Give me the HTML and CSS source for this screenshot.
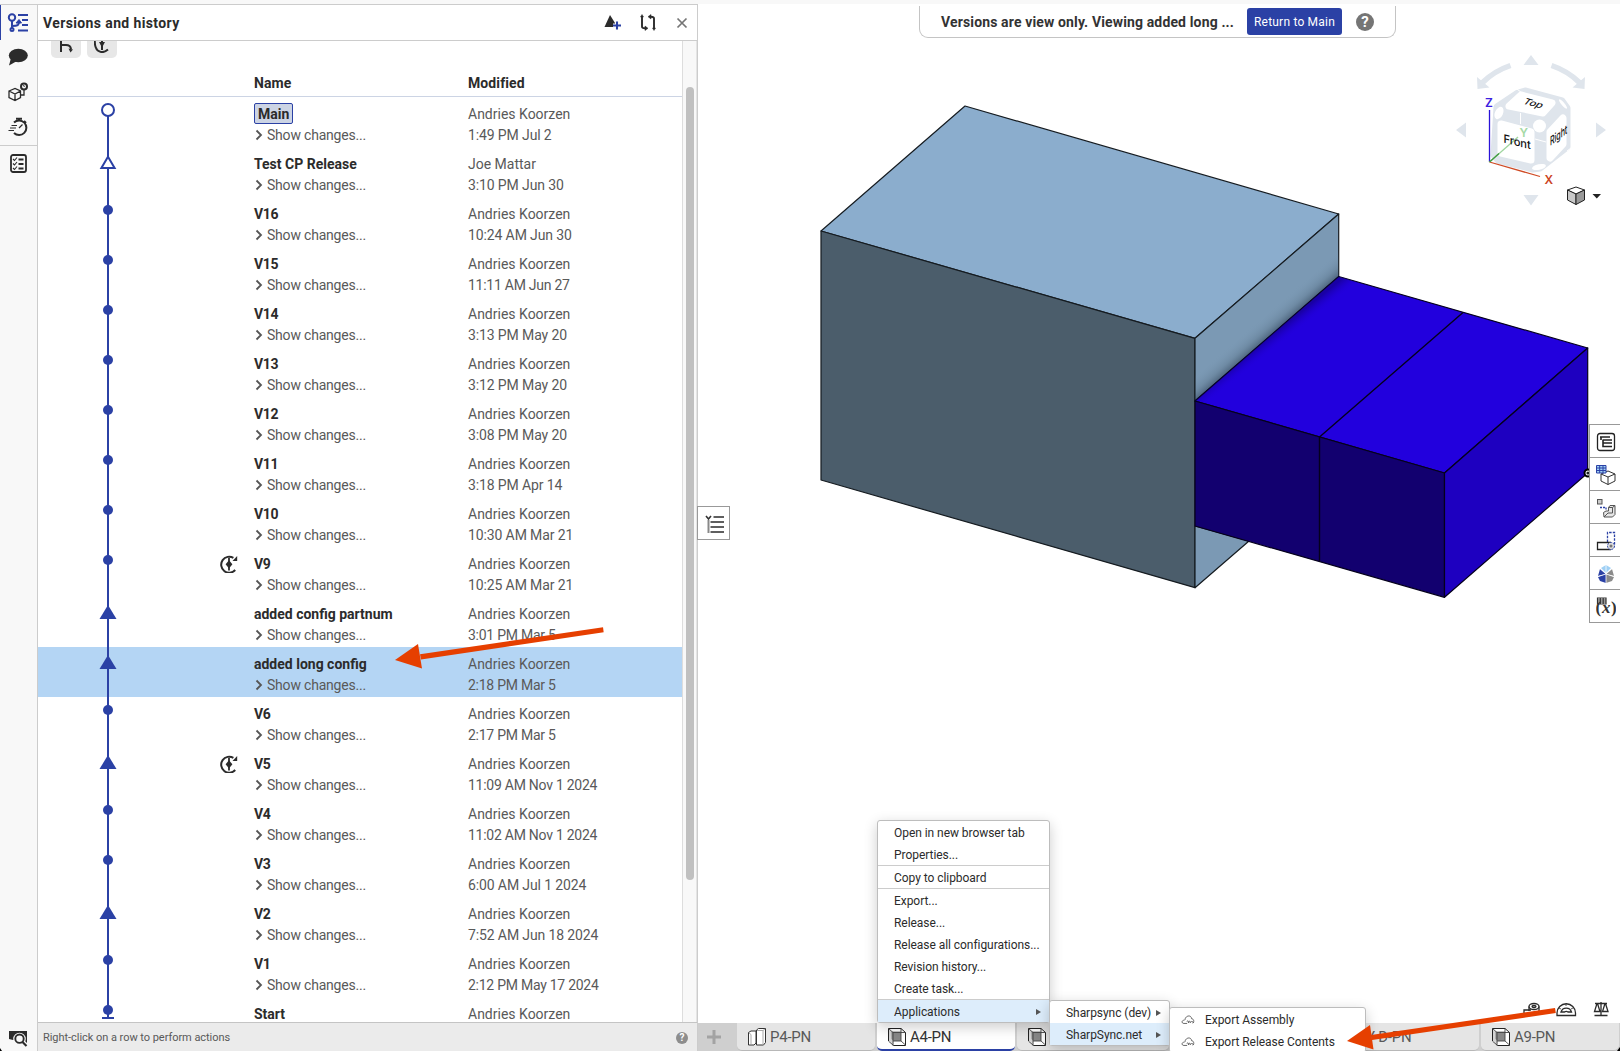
FILE: index.html
```html
<!DOCTYPE html>
<html lang="en">
<head>
<meta charset="utf-8">
<title>Versions and history</title>
<link rel="stylesheet" href="styles.css">
</head>
<body>
<svg class="defs" aria-hidden="true">
  <symbol id="main" viewBox="0 0 24 50"><path d="M12 13V50" class="gl"/><circle cx="12" cy="13" r="6" class="gh"/></symbol>
  <symbol id="open" viewBox="0 0 24 50"><path d="M12 0V50" class="gl"/><path d="M12 9.8L18.6 21H5.4Z" class="gh"/></symbol>
  <symbol id="dot" viewBox="0 0 24 50"><path d="M12 0V50" class="gl"/><circle cx="12" cy="13" r="5" class="gf"/></symbol>
  <symbol id="tri" viewBox="0 0 24 50"><path d="M12 0V50" class="gl"/><path d="M12 8L20.5 22H3.5Z" class="gf"/></symbol>
  <symbol id="start" viewBox="0 0 24 50"><path d="M12 0V20M6 21H18" class="gl"/><circle cx="12" cy="13" r="5" class="gf"/></symbol>
  <symbol id="rev" viewBox="0 0 18 18"><path d="M13.4 2.9A8 8 0 1 0 15.2 15" fill="none" stroke="#2b2b2b" stroke-width="2"/><path d="M17.2 1V6H12.5Z" fill="#2b2b2b"/><path d="M9 3V15.5" stroke="#2b2b2b" stroke-width="1.8"/><path d="M9 5.2L12.4 9.3L9 13.4L5.6 9.3Z" fill="#2b2b2b"/></symbol>
  <symbol id="chev" viewBox="0 0 8 12"><path d="M1.5 1.5L6 6L1.5 10.5" fill="none" stroke="#555" stroke-width="1.8"/></symbol>
  <symbol id="part" viewBox="0 0 18 18"><path d="M.5 .5H13L17.5 4.5V17.5H5.5L.5 13Z" fill="#fff" stroke="#222" stroke-width="1"/><path d="M1 1L5.500 5V17L1 13Z" fill="#d5d5d5"/><path d="M3.500 3.500H13V13H5.500L3.500 11Z" fill="#888"/><path d="M.5 .5L5 4.500H17.500M5 4.500V17.500M13 .5V13L17.500 17M5 13H13" fill="none" stroke="#444" stroke-width=".9"/></symbol>
  <symbol id="cloud" viewBox="0 0 16 12"><path d="M3 10.500C0 10 1 6.500 4 6.800M2.800 10.500H7M4.500 6.500C5 1 12 .5 12 5C15 5 15.500 10 13 10M6.500 8.500C8 7 8.500 7 8.500 9.800C9.500 7 10.500 7 10.500 9.800C11.500 8 13 7.500 14.800 10" fill="none" stroke="#555" stroke-width="1"/></symbol>
</svg>
<div class="app">
  <nav class="rail">
    <div class="rail-group">
      <div class="rail-item active"><svg width="22" height="20" viewBox="0 0 22 20" fill="none" stroke="#2b41a5" stroke-width="2"><circle cx="5" cy="4.500" r="3.200"/><path d="M5 8V15M5 13C11 13 12 12 12 8.500"/><path d="M9 10L12 6.500L14.500 10Z" fill="#2b41a5" stroke-width="1"/><path d="M11 2H21M15 7H21M15 12H21M11 17.500H21"/><circle cx="5" cy="16.500" r="1.500"/></svg></div>
      <div class="rail-item"><svg width="20" height="18" viewBox="0 0 20 18" fill="#2b2b2b"><ellipse cx="10.300" cy="7.500" rx="9.500" ry="6.800"/><path d="M3 10L1 17.500L9 13Z"/></svg></div>
      <div class="rail-item"><svg width="20" height="20" viewBox="0 0 20 20" fill="none" stroke="#2b2b2b" stroke-width="1.300"><path d="M1 9L7 6.500L12.500 9V15.500L7 18.500L1 15.500ZM1 9L7 12L12.500 9M7 12V18.500M12.500 13H16V8"/><circle cx="16" cy="4.500" r="3" stroke-width="2"/><path d="M15 4C15.500 3 17 3.500 16 5" stroke-width="1"/></svg></div>
      <div class="rail-item"><svg width="20" height="20" viewBox="0 0 20 20" fill="none" stroke="#2b2b2b"><path d="M6 5.500A7.300 7.300 0 1 1 6 16" stroke-width="2"/><path d="M8 1.800H14M11 2V4M16 4L18 6" stroke-width="2"/><path d="M11 11L14.500 7.500" stroke-width="1.300"/><path d="M3.500 8.500H9M2 11H8M.5 13.500H6" stroke-width="1.200"/></svg></div>
    </div>
    <div class="rail-item"><svg width="17" height="19" viewBox="0 0 17 19" fill="none" stroke="#2b2b2b"><rect x="1" y="1" width="15" height="17" rx="2" stroke-width="1.800"/><path d="M8.500 5.500H13.500M8.500 10H13.500M8.500 14.500H13.500" stroke-width="1.800"/><path d="M3 5L4.500 6.500L7 3.500M3 9.500L4.500 11L7 8M3 14L4.500 15.500L7 12.500" stroke-width="1.100"/></svg></div>
    <div class="rail-bottom"><svg width="20" height="16" viewBox="0 0 20 16"><path d="M1 0H19V12L16 9H5L1 8Z" fill="#2b2b2b"/><circle cx="11.500" cy="8" r="4.800" fill="#f8f8f8" stroke="#f8f8f8" stroke-width="3"/><circle cx="11.500" cy="7.700" r="4.200" fill="#f8f8f8" stroke="#2b2b2b" stroke-width="1.900"/><path d="M14.500 11L18.500 15" stroke="#2b2b2b" stroke-width="2.200"/></svg></div>
  </nav>

  <section class="panel">
    <header class="panel-head">
      <h1>Versions and history</h1>
      <div class="head-icons">
        <svg width="18" height="17" viewBox="0 0 18 17"><path d="M.5 13L6 1L11 9V13Z" fill="#2b2b2b"/><path d="M13 7.500V15.500M9 11.500H17" stroke="#f8f8f8" stroke-width="4"/><path d="M13 7.500V15.500M9 11.500H17" stroke="#2b41a5" stroke-width="2"/></svg>
        <svg width="16" height="17" viewBox="0 0 16 17" fill="none" stroke="#2b2b2b" stroke-width="1.900"><path d="M2 2V12.500Q2 14.300 5 14.300H6M14 15V4.500Q14 2.700 11 2.700H10"/><path d="M.5 3L2 .5L3.500 3ZM5 12L8 14.300L5 16.500ZM11 .5L8 2.700L11 5ZM12.500 14L14 16.500L15.500 14Z" fill="#2b2b2b" stroke-width=".5"/></svg>
        <svg width="12" height="12" viewBox="0 0 12 12"><path d="M1.500 1.500L10.500 10.500M10.500 1.500L1.500 10.500" stroke="#757575" stroke-width="1.700"/></svg>
      </div>
    </header>
    <div class="panel-body">
      <div class="list">
        <div class="tools">
          <div class="tool"><svg width="16" height="12" viewBox="0 0 16 12" fill="none" stroke="#2b2b2b" stroke-width="2"><path d="M3 0V11M3 4H8Q12.500 4 13 8"/><path d="M10.500 7.500L15 8.500L12.500 11.500Z" fill="#2b2b2b" stroke="none"/></svg></div>
          <div class="tool"><svg width="16" height="12" viewBox="0 0 16 12" fill="none" stroke="#2b2b2b" stroke-width="2"><path d="M.8 0C.5 12 9 13 14 8.500M8 0V9"/><path d="M5 1H11L8 6.500Z" fill="#2b2b2b" stroke="none"/></svg></div>
        </div>
        <div class="cols"><b>Name</b><b>Modified</b></div>
        <div class="row"><svg class="node"><use href="#main"/></svg><i></i><div class="name"><b><mark>Main</mark></b><span><svg><use href="#chev"/></svg>Show changes...</span></div><div class="mod"><span>Andries Koorzen</span><span>1:49 PM Jul 2</span></div></div>
        <div class="row"><svg class="node"><use href="#open"/></svg><i></i><div class="name"><b>Test CP Release</b><span><svg><use href="#chev"/></svg>Show changes...</span></div><div class="mod"><span>Joe Mattar</span><span>3:10 PM Jun 30</span></div></div>
        <div class="row"><svg class="node"><use href="#dot"/></svg><i></i><div class="name"><b class="v">V16</b><span><svg><use href="#chev"/></svg>Show changes...</span></div><div class="mod"><span>Andries Koorzen</span><span>10:24 AM Jun 30</span></div></div>
        <div class="row"><svg class="node"><use href="#dot"/></svg><i></i><div class="name"><b class="v">V15</b><span><svg><use href="#chev"/></svg>Show changes...</span></div><div class="mod"><span>Andries Koorzen</span><span class="tight">11:11 AM Jun 27</span></div></div>
        <div class="row"><svg class="node"><use href="#dot"/></svg><i></i><div class="name"><b class="v">V14</b><span><svg><use href="#chev"/></svg>Show changes...</span></div><div class="mod"><span>Andries Koorzen</span><span>3:13 PM May 20</span></div></div>
        <div class="row"><svg class="node"><use href="#dot"/></svg><i></i><div class="name"><b class="v">V13</b><span><svg><use href="#chev"/></svg>Show changes...</span></div><div class="mod"><span>Andries Koorzen</span><span>3:12 PM May 20</span></div></div>
        <div class="row"><svg class="node"><use href="#dot"/></svg><i></i><div class="name"><b class="v">V12</b><span><svg><use href="#chev"/></svg>Show changes...</span></div><div class="mod"><span>Andries Koorzen</span><span>3:08 PM May 20</span></div></div>
        <div class="row"><svg class="node"><use href="#dot"/></svg><i></i><div class="name"><b class="v">V11</b><span><svg><use href="#chev"/></svg>Show changes...</span></div><div class="mod"><span>Andries Koorzen</span><span>3:18 PM Apr 14</span></div></div>
        <div class="row"><svg class="node"><use href="#dot"/></svg><i></i><div class="name"><b class="v">V10</b><span><svg><use href="#chev"/></svg>Show changes...</span></div><div class="mod"><span>Andries Koorzen</span><span>10:30 AM Mar 21</span></div></div>
        <div class="row"><svg class="node"><use href="#dot"/></svg><svg class="rev"><use href="#rev"/></svg><div class="name"><b class="v">V9</b><span><svg><use href="#chev"/></svg>Show changes...</span></div><div class="mod"><span>Andries Koorzen</span><span>10:25 AM Mar 21</span></div></div>
        <div class="row"><svg class="node"><use href="#tri"/></svg><i></i><div class="name"><b>added config partnum</b><span><svg><use href="#chev"/></svg>Show changes...</span></div><div class="mod"><span>Andries Koorzen</span><span class="tight">3:01 PM Mar 5</span></div></div>
        <div class="row selected"><svg class="node"><use href="#tri"/></svg><i></i><div class="name"><b>added long config</b><span><svg><use href="#chev"/></svg>Show changes...</span></div><div class="mod"><span>Andries Koorzen</span><span class="tight">2:18 PM Mar 5</span></div></div>
        <div class="row"><svg class="node"><use href="#dot"/></svg><i></i><div class="name"><b class="v">V6</b><span><svg><use href="#chev"/></svg>Show changes...</span></div><div class="mod"><span>Andries Koorzen</span><span class="tight">2:17 PM Mar 5</span></div></div>
        <div class="row"><svg class="node"><use href="#tri"/></svg><svg class="rev"><use href="#rev"/></svg><div class="name"><b class="v">V5</b><span><svg><use href="#chev"/></svg>Show changes...</span></div><div class="mod"><span>Andries Koorzen</span><span class="tight">11:09 AM Nov 1 2024</span></div></div>
        <div class="row"><svg class="node"><use href="#dot"/></svg><i></i><div class="name"><b class="v">V4</b><span><svg><use href="#chev"/></svg>Show changes...</span></div><div class="mod"><span>Andries Koorzen</span><span class="tight">11:02 AM Nov 1 2024</span></div></div>
        <div class="row"><svg class="node"><use href="#dot"/></svg><i></i><div class="name"><b class="v">V3</b><span><svg><use href="#chev"/></svg>Show changes...</span></div><div class="mod"><span>Andries Koorzen</span><span>6:00 AM Jul 1 2024</span></div></div>
        <div class="row"><svg class="node"><use href="#tri"/></svg><i></i><div class="name"><b class="v">V2</b><span><svg><use href="#chev"/></svg>Show changes...</span></div><div class="mod"><span>Andries Koorzen</span><span>7:52 AM Jun 18 2024</span></div></div>
        <div class="row"><svg class="node"><use href="#dot"/></svg><i></i><div class="name"><b class="v">V1</b><span><svg><use href="#chev"/></svg>Show changes...</span></div><div class="mod"><span>Andries Koorzen</span><span class="tight">2:12 PM May 17 2024</span></div></div>
        <div class="row last"><svg class="node"><use href="#start"/></svg><i></i><div class="name"><b>Start</b></div><div class="mod"><span>Andries Koorzen</span></div></div>
      </div>
      <div class="track"><div class="thumb"></div></div>
    </div>
    <footer class="panel-foot"><span>Right-click on a row to perform actions</span><em class="help small">?</em></footer>
  </section>

  <main class="stage">
    <div class="canvas">
      <svg class="scene" width="923" height="1018" viewBox="697 5 923 1018">
        <defs>
          <linearGradient id="shadeR" gradientUnits="userSpaceOnUse" x1="1267" y1="339" x2="1254" y2="324"><stop offset="0" stop-color="#1c2c42" stop-opacity=".5"/><stop offset=".4" stop-color="#3d5266" stop-opacity=".2"/><stop offset="1" stop-color="#7b99b4" stop-opacity="0"/></linearGradient>
          <linearGradient id="shadeT" gradientUnits="userSpaceOnUse" x1="1267" y1="339" x2="1275" y2="349"><stop offset="0" stop-color="#10006e" stop-opacity=".5"/><stop offset="1" stop-color="#2200dd" stop-opacity="0"/></linearGradient>
        </defs>
        <g stroke="#151b20" stroke-width="1.200" stroke-linejoin="round">
          <path d="M965 106L1338.700 214L1195 338.300L821 231Z" fill="#8badcd"/>
          <path d="M821 231L1195 338.300V587.700L821 480Z" fill="#4b5d6b"/>
          <path d="M1195 338.300L1338.700 214V277L1195 401Z" fill="#7b99b4"/>
          <path d="M1195 401L1338.700 277V214L1195 338.300Z" fill="url(#shadeR)" stroke="none"/>
          <path d="M1195 526L1249 541L1195 587.700Z" fill="#7b99b4"/>
          <g stroke="#05001c">
            <path d="M1195 401L1338.700 276.500L1587.700 348L1444.500 473Z" fill="#2200dd"/>
            <path d="M1195 401L1338.700 276.500L1587.700 348L1444.500 473Z" fill="url(#shadeT)" stroke="none"/>
            <path d="M1195 401L1444.500 473V597.300L1195 526Z" fill="#12006f"/>
            <path d="M1444.500 473L1587.700 348V473L1444.500 597.300Z" fill="#1e00c0"/>
            <path d="M1319.500 561V437L1463 312.500" fill="none" stroke-width="1.400"/>
          </g>
          <circle cx="1588" cy="473" r="3.500" fill="#fff" stroke="#000" stroke-width="2"/>
          <circle cx="1588" cy="473" r="1" fill="#000"/>
        </g>
        <g fill="#dfe5ec">
          <path d="M1531 55L1538.500 65H1523.500ZM1531 205.500L1523.500 195H1538.500ZM1456 130L1466 122.500V137.500ZM1606 130L1596 122.500V137.500Z"/>
          <path d="M1477 77L1477.500 89L1489.500 87.500ZM1585 77L1584.500 89L1572.500 87.500Z"/>
          <path d="M1510.500 65.500Q1494 71 1482 83M1551.500 65.500Q1568 71 1580 83" fill="none" stroke="#dfe5ec" stroke-width="5.500"/>
          <path d="M1497 107L1518 93L1525 91L1562 101L1567 108V147L1540 168L1533 169L1498 160L1494 155Z" stroke="#dfe5ec" stroke-width="7" stroke-linejoin="round"/>
        </g>
        <g fill="#fff" stroke="#fff" stroke-width="7" stroke-linejoin="round">
          <path d="M1521 95L1552 103L1543 113L1509 106Z"/>
          <path d="M1501 124L1531 132V160L1501 153Z"/>
          <path d="M1550 132L1563 118V144L1550 158Z"/>
          <g stroke="none"><circle cx="1539.500" cy="126" r="6.500"/><ellipse cx="1499" cy="113" rx="4" ry="6.500" transform="rotate(25 1499 113)"/><ellipse cx="1539" cy="167" rx="7" ry="2.800" transform="rotate(-12 1539 167)"/><ellipse cx="1563" cy="104" rx="1.500" ry="6" transform="rotate(-40 1563 104)"/></g>
          <path d="M1520.500 113V124M1535 139L1546 142M1517 89L1522 93M1567 151L1571 148" stroke-width="1"/>
        </g>
        <g fill="none" stroke-width="1.300"><path d="M1489.500 110V162" stroke="#2a12d8"/><path d="M1489.500 162L1540 176.500" stroke="#cf4a24"/><path d="M1489.500 162L1518 137" stroke="#9fd59f"/><path d="M1489.500 162L1499 153.500" stroke="#3f9a3f"/></g>
        <g class="axis"><text x="1485" y="107" fill="#3b20e0">Z</text><text x="1544.500" y="184" fill="#cc4423">X</text><text x="1519.500" y="136.500" fill="#a5d9a5">Y</text></g>
        <g class="face"><text transform="matrix(.97 .24 0 1 1503.500 142.500)">Front</text><text transform="matrix(.92 .25 -.55 .66 1522 103.500)">Top</text><text transform="matrix(.62 -.46 0 1.080 1550 146)">Right</text></g>
        <g stroke="#222" stroke-width="1" stroke-linejoin="round"><path d="M1567.500 190L1576 187L1584.500 190L1576 194Z" fill="#fff"/><path d="M1567.500 190L1576 194V204.500L1567.500 200Z" fill="#c8c8c8"/><path d="M1584.500 190L1576 194V204.500L1584.500 200Z" fill="#999"/></g>
        <path d="M1592.500 194H1601L1596.800 198.500Z" fill="#222"/>
        <g fill="none" stroke="#2b2b2b" stroke-width="1.300">
          <ellipse cx="1534" cy="1006.500" rx="5" ry="3"/><ellipse cx="1534" cy="1006.500" rx="2" ry="1"/><path d="M1529 1006.500V1011M1539 1006.500V1014H1524V1010H1531"/>
          <path d="M1557 1015.500V1013A9 9 0 0 1 1575.500 1013V1015.500Z"/><path d="M1561 1012A5.500 5.500 0 0 1 1571.500 1012H1568A3 3 0 0 0 1564.500 1012Z"/><path d="M1559 1008L1561 1009M1566 1004V1006M1573 1008L1571 1009" stroke-width=".8"/>
          <path d="M1601 1002V1015M1594.500 1015.500H1607.500M1595 1003.500H1607M1597 1003.500L1594.500 1011.500H1600L1597.500 1003.500M1605 1003.500L1602.500 1011.500H1608L1605.500 1003.500"/>
        </g>
      </svg>
      <div class="banner"><strong>Versions are view only. Viewing added long ...</strong><button>Return to Main</button><em class="help">?</em></div>
      <div class="flyout"><svg width="20" height="20" viewBox="0 0 20 20"><path d="M8.500 3H19M5.500 8H19M5.500 13H19M5.500 18H19" stroke="#2b2b2b" stroke-width="1.300"/><path d="M3.500 6V19" stroke="#888" stroke-width="2"/><path d="M1 2L3.500 5L6 2" fill="none" stroke="#333" stroke-width="1.600"/></svg></div>
      <div class="side">
        <div><svg viewBox="0 0 20 20" fill="none" stroke="#222"><rect x="1.500" y="1.500" width="17" height="17" rx="2.500" stroke-width="1.300"/><path d="M4 5H14M6.500 8H16M6.500 11H16M9 14.500H16M5 5V8M7 8V14.500H9" stroke-width="1.600"/></svg></div>
        <div><svg viewBox="0 0 20 20" fill="none"><path d="M5 9L12 6L19 9V16L12 19.500L5 16ZM5 9L12 12L19 9M12 12V19.500" stroke="#333" fill="#fff"/><path d="M.5 .5H10V8H.5Z" fill="#9fd0f5" stroke="#2b41a5"/><path d="M3.700 0V8M7 0V8M0 3H10M0 5.500H10" stroke="#2b41a5"/></svg></div>
        <div><svg viewBox="0 0 20 20" fill="none" stroke="#555"><rect x="1.500" y="1.500" width="4.500" height="4.500" fill="#ccc"/><path d="M4 9.500H10V12" stroke="#2b41a5" stroke-dasharray="2 1" stroke-width="1.300"/><path d="M12.500 9.500L14 7.500H19V16.500L16.500 19H8L7.500 14.500L10 13H12.500Z" fill="#e6e6e6"/><path d="M12.500 9.500H16.500L19 7.500M16.500 9.500V15H12L8 19"/></svg></div>
        <div><svg viewBox="0 0 20 20" fill="none"><path d="M11.500 11V1.500H18.500V14" stroke="#2b41a5" stroke-width="1.300" stroke-dasharray="2.500 1.200"/><path d="M15 11.500H1.500V18.500H15" stroke="#222" stroke-width="1.300"/><circle cx="15" cy="15" r="3.500" fill="#ddd" stroke="#2b41a5" stroke-dasharray="2 1"/><circle cx="15" cy="15" r="1.500" fill="#777"/></svg></div>
        <div><svg viewBox="0 0 20 20"><path d="M10 1L15 4L10 9L5 4Z" fill="#9fd0f5"/><path d="M4 5L10 10L2 12ZM2 13L10 10V19L4 17Z" fill="#2b41a5"/><path d="M16 5L10 10L18 12ZM18 13L10 10V19L16 17Z" fill="#8b8b8b"/><path d="M4 4.500L10 10L16 4.500M2 12.500L10 10L18 12.500M10 1V19" stroke="#fff" stroke-width=".8" fill="none"/></svg></div>
        <div><svg viewBox="0 0 20 20" fill="none" stroke="#333"><path d="M1.500 1H10V7H1.500ZM4.300 1V7M7.200 1V7M1 3H10M1 5H10" stroke-width="1.200"/><text x="-.5" y="16">(</text><text x="6" y="15.500" class="var">x</text><text x="15" y="16">)</text></svg></div>
      </div>
    </div>
    <div class="tabs">
      <div class="plus"><svg width="16" height="16" viewBox="0 0 16 16"><path d="M8 1V15M1 8H15" stroke="#a3a3a3" stroke-width="3"/></svg></div>
      <div class="tab t1"><svg width="18" height="18" viewBox="0 0 18 18" fill="#fff" stroke="#333"><path d="M.5 4.500L3 3H8V15L6 17H.5Z"/><path d="M8.500 2L10.500 .5H17.500V14.500L15.500 17H8.500Z"/><path d="M9 2.500H15V16.500M15 2.500L17 1M1 5L3 6.500V16" stroke="#aaa"/></svg>P4-PN</div>
      <div class="tab t2 on"><svg width="18" height="18"><use href="#part"/></svg>A4-PN</div>
      <div class="tab t3"><svg width="18" height="18"><use href="#part"/></svg></div>
      <div class="tab t4"></div>
      <div class="tab t5">Y-D-PN</div>
      <div class="tab t6"><svg width="18" height="18"><use href="#part"/></svg>A9-PN</div>
    </div>
  </main>

  <div class="menu m1">
    <div>Open in new browser tab</div><div>Properties...</div><hr>
    <div>Copy to clipboard</div><hr>
    <div>Export...</div><div>Release...</div><div>Release all configurations...</div><div>Revision history...</div><div>Create task...</div><hr>
    <div class="hot">Applications<s></s></div>
  </div>
  <div class="menu m2"><div>Sharpsync (dev)<s></s></div><div class="hot">SharpSync.net<s></s></div></div>
  <div class="menu m3"><div><svg width="14" height="11"><use href="#cloud"/></svg>Export Assembly</div><div><svg width="14" height="11"><use href="#cloud"/></svg>Export Release Contents</div></div>

  <svg class="marks" width="1620" height="1051" viewBox="0 0 1620 1051" fill="#e63f00">
    <path d="M603 627.300L420 654.200L421 659.500L603.700 632.200Z"/><path d="M395 660L418 644L422 668.500Z"/>
    <path d="M1555 1008L1371 1035L1372 1040L1555.800 1013Z"/><path d="M1347 1041L1370 1025L1373.500 1049.500Z"/>
    <path d="M0 1048V1051H2ZM1620 1047V1051H1617Z" fill="#000"/>
  </svg>
</div>
</body>
</html>
```
FILE: styles.css
```css
* { box-sizing: border-box; }
body { margin: 0; background: #fff; font-family: Roboto, "Liberation Sans", sans-serif; font-size: 14px; color: #2b2b2b; overflow: hidden; }
svg { display: block; flex: none; }
.defs { position: absolute; width: 0; height: 0; }
.gl { stroke: #2b41a5; stroke-width: 2; fill: none; }
.gh { stroke: #2b41a5; stroke-width: 2; fill: #fff; }
.gf { fill: #2b41a5; }

.app { position: relative; display: grid; grid-template-columns: 38px 660px 1fr; width: 1620px; height: 1051px; padding-top: 4px; background: #f8f8f8; overflow: hidden; }

.rail { display: flex; flex-direction: column; border-top: 1px solid #ccc; border-right: 1px solid #ccc; }
.rail-group { border-bottom: 1px solid #ccc; height: 141px; }
.rail-item { height: 35px; display: flex; align-items: center; justify-content: center; padding: 0 1px 2px 0; }
.rail-item.active { box-shadow: inset 1px 0 #2b41a5; padding: 0 1px 0 0; }
.rail-bottom { margin-top: auto; padding: 0 0 4px 8px; }
.rail > .rail-item { padding: 0 1px 0 0; }

.panel { display: flex; flex-direction: column; border-top: 1px solid #ccc; border-right: 1px solid #ccc; background: #fff; min-width: 0; min-height: 0; }
.panel-head { flex: none; display: flex; justify-content: space-between; align-items: center; height: 36px; padding: 0 9px 0 5px; border-bottom: 1px solid #ccc; }
h1 { margin: 0; font-size: 14px; font-weight: 700; letter-spacing: .38px; }
.head-icons { display: flex; align-items: center; gap: 18px; }
.head-icons svg:last-child { margin-left: 2px; }
.panel-body { flex: 1; display: flex; min-height: 0; overflow: hidden; }
.list { width: 644px; overflow: hidden; }
.tools { display: flex; gap: 6px; padding-left: 13px; height: 17px; }
.tool { width: 30px; height: 17px; padding-left: 7px; background: #e7e7e7; border-radius: 0 0 5px 5px; }
.cols { height: 39px; display: grid; grid-template-columns: 214px 1fr; padding: 17px 0 0 216px; line-height: 16px; border-bottom: 1px solid #ccd4e4; letter-spacing: .1px; }
.row { display: grid; grid-template-columns: 170px 46px 214px 1fr; height: 50px; color: #595959; }
.row.selected { background: #b4d5f4; }
.node { width: 24px; height: 50px; margin-left: 58px; }
.rev { width: 18px; height: 18px; margin: 8px 0 0 12px; }
.name, .mod { display: flex; flex-direction: column; padding-top: 6.5px; line-height: 21px; white-space: nowrap; }
.name b { color: #2b2b2b; letter-spacing: 0; }
.name .v { letter-spacing: -.4px; }
.name span { display: flex; align-items: center; gap: 4px; letter-spacing: -.2px; }
.name span svg { width: 8px; height: 12px; margin-left: 1px; }
.mod span { letter-spacing: -.12px; }
.mod span:first-child { letter-spacing: 0; }
.mod .tight { letter-spacing: -.26px; }
mark { display: inline-block; height: 21px; line-height: 20px; margin-top: -1px; padding: 0 3px; color: inherit; background: #ccd4e4; border: 1px solid #2b41a5; border-radius: 2px; vertical-align: top; }
.track { width: 15px; padding: 46px 2px 0 3px; border-left: 1px solid #ddd; border-right: 1px solid #e4e4e4; background: #f8f8f8; }
.thumb { width: 8px; height: 793px; border-radius: 4px; background: #c0c0c0; }
.panel-foot { flex: none; display: flex; align-items: center; justify-content: space-between; height: 29px; padding: 1px 9px 0 5px; border-top: 1px solid #c4c4c4; background: #ebebeb; color: #595959; font-size: 11px; letter-spacing: -.04px; }
.help { display: flex; align-items: center; justify-content: center; width: 18px; height: 18px; border-radius: 50%; background: #757575; color: #fff; font-size: 15px; font-weight: 700; font-style: normal; }
.help.small { width: 12px; height: 12px; font-size: 10px; background: #8d8d8d; }

.stage { display: flex; flex-direction: column; min-width: 0; }
.canvas { position: relative; flex: 1; background: #fff; min-height: 0; }
.scene { position: absolute; left: -1px; top: 1px; }
.axis { font: 600 12px Inter, sans-serif; }
.face { font: 500 11.5px Inter, sans-serif; letter-spacing: -.1px; fill: #111; }
.banner { position: absolute; left: 221px; top: 2px; width: 477px; height: 32px; display: flex; align-items: center; padding-left: 21px; border: 1px solid #c4c4c4; border-top: 0; border-radius: 0 0 9px 9px; background: #fff; color: #333; }
.banner strong { width: 306px; white-space: nowrap; letter-spacing: .14px; }
button { width: 95px; height: 27px; padding: 0; border: 0; border-radius: 3px; background: #2b41a5; color: #fff; font: 12px Roboto, sans-serif; letter-spacing: .2px; }
.banner .help { margin-left: 14px; }
.flyout { position: absolute; left: -1px; top: 502px; width: 33px; height: 34px; padding: 7px 6px 5px 7px; border: 1px solid #999; background: #fff; }
.side { position: absolute; right: 0; top: 420px; width: 31px; border: 1px solid #999; border-right: 0; background: #fff; }
.side div { height: 33px; padding: 7px 0 0 6px; border-bottom: 1px solid #999; }
.side div:last-child { border: 0; height: 32px; }
.side svg { width: 20px; height: 20px; }
.side text { font: 700 17px "Liberation Serif", serif; fill: #333; stroke: none; }
.side .var { font-style: italic; }

.tabs { display: flex; gap: 2px; height: 28px; background: #cfcfcf; color: #595959; font-size: 15px; letter-spacing: -.25px; }
.plus { width: 37px; display: flex; align-items: center; padding-left: 8px; }
.tab { display: flex; align-items: center; gap: 4px; width: 138px; padding: 1px 0 0 11px; background: #e5e5e5; border-bottom: 1px solid #b8b8b8; border-radius: 0 0 5px 5px; }
.tab.on { background: #fff; color: #333; border-bottom: 2px solid #2b41a5; }
.tab.t3 { width: 152px; }
.tab.t4 { width: 171px; }
.tab.t5 { width: 135px; padding-left: 22px; }

.menu { position: absolute; background: #fff; border: 1px solid #bdbdbd; border-radius: 3px; box-shadow: 0 4px 14px rgba(0, 0, 0, .2); font-size: 12px; letter-spacing: -.05px; color: #2b2b2b; white-space: nowrap; }
.menu div { display: flex; align-items: center; height: 22px; padding: 1px 0 0 16px; }
.menu hr { margin: 0; border: 0; border-top: 1px solid #ccc; }
.menu .hot { background: #ddedfb; }
.menu s { margin: 0 8px 0 auto; border-left: 5px solid #555; border-top: 3px solid transparent; border-bottom: 3px solid transparent; }
.m1 { left: 877px; top: 820px; width: 173px; }
.m2 { left: 1049px; top: 1000px; width: 121px; }
.m3 { left: 1169px; top: 1007px; width: 197px; }
.m3 svg { margin: 0 10px 0 -5px; }
.marks { position: absolute; left: 0; top: 0; pointer-events: none; }
```
